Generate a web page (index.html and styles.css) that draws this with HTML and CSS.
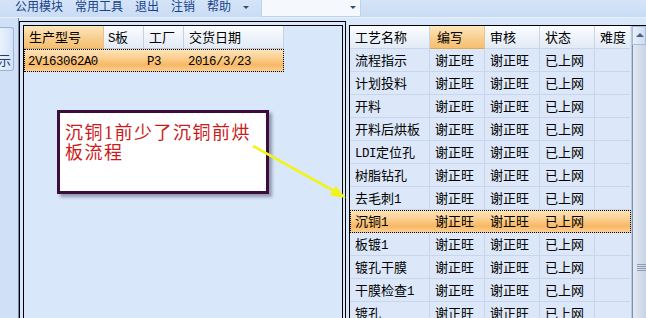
FILE: index.html
```html
<!DOCTYPE html>
<html lang="zh">
<head>
<meta charset="utf-8">
<link rel="stylesheet" href="styles.css">
</head>
<body>
<div class="menubar">
  <span class="mi">公用模块</span>
  <span class="mi">常用工具</span>
  <span class="mi">退出</span>
  <span class="mi">注销</span>
  <span class="mi">帮助</span>
  <span class="caret"></span>
  <div class="combo"><span class="combo-arrow"></span></div>
</div>
<div class="main">
  <div class="side">
    <div class="tab">示</div>
  </div>
  <div class="left">
    <div class="lgrid">
      <div class="lrow lhdr">
        <div class="c w80 sel-h">生产型号</div>
        <div class="c w40 p4"><span class="m">S</span>板</div>
        <div class="c w40">工厂</div>
        <div class="c w100">交货日期</div>
      </div>
      <div class="lrow lsel">
        <div class="c w80 p4"><span class="m">2V163062A0</span></div>
        <div class="c w40 p4"></div>
        <div class="c w40 p3"><span class="m">P3</span></div>
        <div class="c w100 p4"><span class="m">2016/3/23</span></div>
      </div>
    </div>
  </div>
  <div class="right">
    <div class="rgrid">
      <div class="rrow rhdr">
        <div class="c w80">工艺名称</div>
        <div class="c w55 sel-h p7">编写</div>
        <div class="c w55">审核</div>
        <div class="c w55">状态</div>
        <div class="c w35">难度</div>
      </div>
      <div class="rrow"><div class="c w80">流程指示</div><div class="c w55">谢正旺</div><div class="c w55">谢正旺</div><div class="c w55">已上网</div><div class="c w35"></div></div>
      <div class="rrow"><div class="c w80">计划投料</div><div class="c w55">谢正旺</div><div class="c w55">谢正旺</div><div class="c w55">已上网</div><div class="c w35"></div></div>
      <div class="rrow"><div class="c w80">开料</div><div class="c w55">谢正旺</div><div class="c w55">谢正旺</div><div class="c w55">已上网</div><div class="c w35"></div></div>
      <div class="rrow"><div class="c w80">开料后烘板</div><div class="c w55">谢正旺</div><div class="c w55">谢正旺</div><div class="c w55">已上网</div><div class="c w35"></div></div>
      <div class="rrow"><div class="c w80"><span class="m">LDI</span>定位孔</div><div class="c w55">谢正旺</div><div class="c w55">谢正旺</div><div class="c w55">已上网</div><div class="c w35"></div></div>
      <div class="rrow"><div class="c w80">树脂钻孔</div><div class="c w55">谢正旺</div><div class="c w55">谢正旺</div><div class="c w55">已上网</div><div class="c w35"></div></div>
      <div class="rrow"><div class="c w80">去毛刺<span class="m">1</span></div><div class="c w55">谢正旺</div><div class="c w55">谢正旺</div><div class="c w55">已上网</div><div class="c w35"></div></div>
      <div class="rrow rsel"><div class="c w80">沉铜<span class="m">1</span></div><div class="c w55">谢正旺</div><div class="c w55">谢正旺</div><div class="c w55">已上网</div><div class="c w35"></div></div>
      <div class="rrow"><div class="c w80">板镀<span class="m">1</span></div><div class="c w55">谢正旺</div><div class="c w55">谢正旺</div><div class="c w55">已上网</div><div class="c w35"></div></div>
      <div class="rrow"><div class="c w80">镀孔干膜</div><div class="c w55">谢正旺</div><div class="c w55">谢正旺</div><div class="c w55">已上网</div><div class="c w35"></div></div>
      <div class="rrow"><div class="c w80">干膜检查<span class="m">1</span></div><div class="c w55">谢正旺</div><div class="c w55">谢正旺</div><div class="c w55">已上网</div><div class="c w35"></div></div>
      <div class="rrow"><div class="c w80">镀孔</div><div class="c w55">谢正旺</div><div class="c w55">谢正旺</div><div class="c w55">已上网</div><div class="c w35"></div></div>
    </div>
    <div class="sb">
      <div class="sb-up"><span class="sb-arrow"></span></div>
      <div class="sb-thumb"><span class="grip"></span></div>
    </div>
  </div>
</div>

<div class="callout">沉铜<span class="m1">1</span>前少了沉铜前烘板流程</div>
<svg class="arrow" width="646" height="318" viewBox="0 0 646 318">
  <line x1="253" y1="146" x2="334" y2="191" stroke="#f3f31c" stroke-width="2.6"/>
  <polygon points="346,198 330,195.5 335.5,186" fill="#f3f31c"/>
</svg>
</body>
</html>
```

FILE: styles.css
```css
* { box-sizing: border-box; }

body {
  margin: 0;
  width: 646px;
  height: 318px;
  overflow: hidden;
  position: relative;
  background: #d9e7fb;
  font-family: "Noto Sans CJK SC", sans-serif;
  color: #000;
}

.menubar {
  height: 18px;
  display: flex;
  align-items: flex-start;
  gap: 12px;
  padding-left: 15px;
  background: linear-gradient(#d5e4f8, #c9dcf4);
  border-bottom: 1px solid #e6effb;
}

.mi {
  font-size: 12px;
  line-height: 13px;
  margin-top: -1px;
  color: #15428b;
}

.caret {
  width: 0;
  height: 0;
  margin-top: 6px;
  border-left: 3px solid transparent;
  border-right: 3px solid transparent;
  border-top: 3px solid #2f4e7c;
}

.combo {
  width: 100px;
  height: 17px;
  position: relative;
  background: #f5f9fe;
  border: 1px solid #bfd2ea;
  border-top: none;
}

.combo-arrow {
  position: absolute;
  left: 88px;
  top: 6px;
  width: 0;
  height: 0;
  border-left: 3px solid transparent;
  border-right: 3px solid transparent;
  border-top: 3px solid #2f4e7c;
}

.main {
  display: flex;
  height: 300px;
}

.side {
  width: 19px;
  flex: none;
  padding-top: 9px;
  background: #d0e1f7;
  border-right: 1px solid #6f88ac;
}

.tab {
  width: 14px;
  height: 44px;
  border: 1px solid #9ab3d6;
  border-left: none;
  border-radius: 0 3px 3px 0;
  background: linear-gradient(90deg, #e9f1fc, #d4e3f7);
  display: flex;
  align-items: flex-end;
  justify-content: flex-end;
  padding: 0 2px 3px 0;
  overflow: hidden;
  font-size: 13px;
  line-height: 15px;
  color: #1f3e6e;
}

.left {
  width: 327px;
  flex: none;
  margin-top: 3px;
  border: 1px solid #000;
  border-bottom: none;
  padding: 3px 2px 0 3px;
}

.lgrid {
  height: 100%;
  border: 1px solid #000;
  border-bottom: none;
}

.lrow, .rrow {
  display: flex;
  font-size: 13px;
}

.c {
  flex: none;
  padding-left: 5px;
  white-space: nowrap;
  overflow: hidden;
}

.w35 { width: 35px; }
.w40 { width: 40px; }
.w55 { width: 55px; }
.w80 { width: 80px; }
.w100 { width: 100px; }
.p3 { padding-left: 3px; }
.p4 { padding-left: 4px; }
.p7 { padding-left: 7px; }

.m {
  font-family: "Liberation Mono", monospace;
  font-size: 12.4px;
  letter-spacing: -0.45px;
}

.lhdr .c, .rhdr .c {
  height: 20px;
  line-height: 19px;
  background: linear-gradient(#fbfdff, #e2eaf5);
  border-right: 1px solid #c6d2e2;
  border-bottom: 1px solid #b7c6da;
}

.lhdr .c.sel-h, .rhdr .c.sel-h {
  background: linear-gradient(#fde7bd, #f8cc8a 60%, #f6bf72);
  border-right-color: #e6c28d;
  border-bottom-color: #d9a964;
}

.lrow .c {
  height: 23px;
  line-height: 22px;
}

.lsel {
  width: 260px;
  outline: 1px dotted #000;
  outline-offset: -1px;
  background: linear-gradient(#fde6bb, #fbd297 35%, #f8b863 70%, #fad39f);
}

.right {
  flex: 1;
  display: flex;
  margin-top: 7px;
  margin-left: 3px;
  border-top: 1px solid #000;
  border-left: 1px solid #000;
}

.rgrid {
  width: 282px;
  flex: none;
  border-right: 1px solid #bccbe0;
}

.rrow .c {
  height: 23px;
  line-height: 22px;
  border-right: 1px solid #c7d6ea;
  border-bottom: 1px solid #c7d6ea;
}

.rrow .c.w35 { border-right: none; }
.rhdr .c.w35 { border-right: none; }

.rrow:not(.rhdr) {
  background: #dce8f9;
}

.rrow.rsel {
  background: linear-gradient(#fde6bb, #fbd297 35%, #f8b863 70%, #fad39f);
  outline: 1px dotted #000;
  outline-offset: -1px;
}

.rrow.rsel .c {
  border-right-color: transparent;
  border-bottom-color: transparent;
}

.sb {
  width: 14px;
  flex: none;
  display: flex;
  flex-direction: column;
  background: #e6eef8;
}

.sb-up {
  height: 19px;
  position: relative;
  background: linear-gradient(90deg, #e9f0fa, #cfdcef);
  border: 1px solid #a9bdd9;
}

.sb-arrow {
  position: absolute;
  left: 3px;
  top: 6px;
  width: 0;
  height: 0;
  border-left: 4px solid transparent;
  border-right: 4px solid transparent;
  border-bottom: 4px solid #4a5f84;
}

.sb-thumb {
  flex: 1;
  position: relative;
  border-left: 1px solid #7b8fb0;
  background: linear-gradient(90deg, #e3e9f2, #c8d3e4);
}

.grip {
  position: absolute;
  left: 4px;
  top: 219px;
  width: 9px;
  height: 8px;
  background: repeating-linear-gradient(#8e9cb4 0 1px, transparent 1px 2px);
}

.callout {
  position: absolute;
  left: 57px;
  top: 110px;
  width: 212px;
  height: 84px;
  padding: 9px 4px 0 5px;
  background: #fff;
  border: 3px solid #3b0d3c;
  box-shadow: 3px 3px 3px rgba(60, 60, 80, 0.45);
  color: #cc1a1a;
  font-size: 18px;
  line-height: 18px;
  letter-spacing: 1.5px;
}

.m1 {
  font-family: "Liberation Serif", serif;
}

.arrow {
  position: absolute;
  left: 0;
  top: 0;
}
```
